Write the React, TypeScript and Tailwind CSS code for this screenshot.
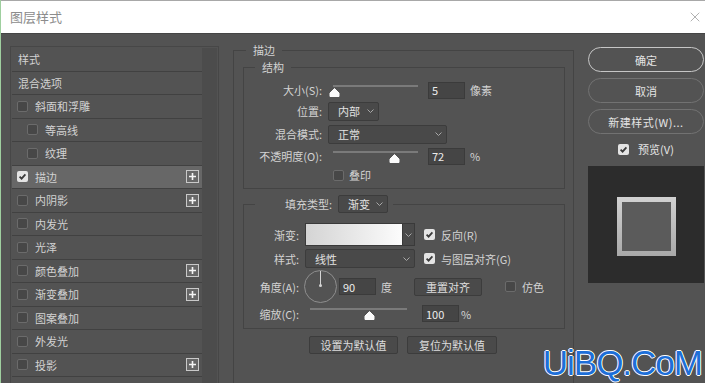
import React from 'react'
import { X } from 'lucide-react'

const layers = [
  { label: '样式', header: true },
  { label: '混合选项', header: true },
  { label: '斜面和浮雕' },
  { label: '等高线', indent: true },
  { label: '纹理', indent: true },
  { label: '描边', checked: true, plus: true, active: true },
  { label: '内阴影', plus: true },
  { label: '内发光' },
  { label: '光泽' },
  { label: '颜色叠加', plus: true },
  { label: '渐变叠加', plus: true },
  { label: '图案叠加' },
  { label: '外发光' },
  { label: '投影', plus: true },
]

const Checkbox = ({ checked = false }: { checked?: boolean }) =>
  checked ? (
    <span className="w-[11px] h-[11px] shrink-0 rounded-[2px] bg-[#e4e4e4] flex items-center justify-center">
      <svg width="9" height="9" viewBox="0 0 9 9">
        <path d="M1.6 4.6 L3.6 6.6 L7.4 2.4" stroke="#3a3a3a" strokeWidth="1.8" fill="none" />
      </svg>
    </span>
  ) : (
    <span className="w-[11px] h-[11px] shrink-0 rounded-[2px] border border-[#6b6b6b] bg-[#474747]" />
  )

const PlusBox = () => (
  <span className="w-[13px] h-[13px] border border-[#c9c9c9] bg-[#676767] flex items-center justify-center">
    <svg width="9" height="9" viewBox="0 0 9 9">
      <path d="M4.5 1 V8 M1 4.5 H8" stroke="#f4f4f4" strokeWidth="1.6" />
    </svg>
  </span>
)

const Chevron = () => (
  <svg width="7" height="4" viewBox="0 0 7 4">
    <path d="M0.5 0.5 L3.5 3.5 L6.5 0.5" stroke="#a8a8a8" fill="none" />
  </svg>
)

const Select = ({ value, w, h = 'h-[19px]' }: { value: string; w: string; h?: string }) => (
  <div className={`${w} ${h} ml-[6px] flex items-center justify-between pl-[9px] pr-[4px] bg-[#494949] border border-[#3c3c3c] rounded-[2px] text-[#e2e2e2]`}>
    <span>{value}</span>
    <Chevron />
  </div>
)

const NumBox = ({ value }: { value: string }) => (
  <div className="w-[37px] h-[17px] flex items-center pl-[3px] bg-[#454545] border border-[#3b3b3b] text-[#ececec]">
    {value}
  </div>
)

const Slider = ({ pct, w, inset }: { pct: number; w: string; inset: string }) => (
  <div className={`relative ${w} h-[18px]`}>
    <div className={`absolute ${inset} top-[4px] h-[2px] bg-[#7a7a7a]`}>
      <svg
        className="absolute top-[3px]"
        style={{ left: `calc(${pct}% - 5.5px)` }}
        width="11"
        height="9"
        viewBox="0 0 11 9"
      >
        <path d="M5.5 0.5 L10 5 V8.5 H1 V5 Z" fill="#fafafa" stroke="#fafafa" strokeLinejoin="round" />
      </svg>
    </div>
  </div>
)

const Button = ({ label, w }: { label: string; w: string }) => (
  <div className={`${w} h-[18px] flex items-center justify-center bg-[#4a4a4a] border border-[#3c3c3c] rounded-[2px] text-[#dedede]`}>
    {label}
  </div>
)

const App = () => {
  return (
    <div className='w-[705px] h-[383px] overflow-hidden relative bg-[#535353] border-l border-[#9fcf9f] text-[11px] leading-[16px] text-[#d2d2d2] font-["Noto_Sans_CJK_SC","Liberation_Sans",sans-serif]'>
      {/* title bar */}
      <div className="h-[34px] bg-white border-t border-t-[#a8a8a8] border-b border-b-[#454545] flex items-center justify-between pl-[9px] pr-[2px]">
        <span className="text-[13px] text-[#8c8c8c]">图层样式</span>
        <X size={16} strokeWidth={1} className="text-[#8a8a8a]" />
      </div>

      <div className="flex items-start h-[349px]">
        {/* layer list */}
        <div className="ml-[9px] mt-[12px] w-[209px] h-[400px] border border-[#474747] p-px flex">
          <div className="w-[190px]">
            {layers.map((l) => (
              <div
                key={l.label}
                className={`h-[23.5px] border-b border-[#414141] flex items-center pr-[3px] ${l.active ? 'bg-[#676767]' : ''} ${l.header ? 'pl-[6px]' : l.indent ? 'pl-[15px]' : 'pl-[5px]'}`}
              >
                {!l.header && <Checkbox checked={l.checked} />}
                <span className={`flex-1 ${l.header ? '' : 'ml-[7px]'}`}>{l.label}</span>
                {l.plus && <PlusBox />}
              </div>
            ))}
          </div>
          <div className="flex-1 bg-[#4c4c4c]" />
        </div>

        {/* stroke settings */}
        <fieldset className="ml-[14px] mt-[8px] w-[341px] border border-[#444444] pl-[9px] pr-[8px] pb-[80px]">
          <legend className="ml-[3px] px-[7px]">描边</legend>

          <fieldset className="mt-px border border-[#444444] pb-[6px]">
            <legend className="ml-[11px] px-[7px]">结构</legend>
            <div className="flex items-center h-[18px] mt-[6px]">
              <span className="w-[78px] text-right">大小(S):</span>
              <div className="ml-[6px]">
                <Slider pct={2} w="w-[95px]" inset="left-[5px] right-[5px]" />
              </div>
              <div className="ml-[5px]"><NumBox value="5" /></div>
              <span className="ml-[5px]">像素</span>
            </div>
            <div className="flex items-center h-[20px] mt-[2px]">
              <span className="w-[78px] text-right">位置:</span>
              <Select value="内部" w="w-[51px]" />
            </div>
            <div className="flex items-center h-[20px] mt-[3px]">
              <span className="w-[78px] text-right">混合模式:</span>
              <Select value="正常" w="w-[119px]" />
            </div>
            <div className="flex items-center h-[18px] mt-[3px]">
              <span className="w-[78px] text-right">不透明度(O):</span>
              <div className="ml-[6px]">
                <Slider pct={72} w="w-[95px]" inset="left-[5px] right-[5px]" />
              </div>
              <div className="ml-[5px]"><NumBox value="72" /></div>
              <span className="ml-[5px]">%</span>
            </div>
            <div className="flex items-center h-[14px] mt-[3px] pl-[89px]">
              <Checkbox />
              <span className="ml-[5px]">叠印</span>
            </div>
          </fieldset>

          <fieldset className="mt-[6px] border border-[#444444] pb-[5px]">
            <legend className="ml-[11px] pl-[30px] pr-[5px]">
              <span className="inline-flex items-center h-[18px]">
                <span>填充类型:</span>
                <Select value="渐变" w="w-[50px]" h="h-[18px]" />
              </span>
            </legend>

            <div className="flex items-center h-[23px] mt-[10px]">
              <span className="w-[55px] text-right">渐变:</span>
              <div className="ml-[6px] w-[110px] h-[23px] flex border border-[#3a3a3a]">
                <div className="flex-1 bg-gradient-to-r from-[#d4d4d4] to-[#fcfcfc]" />
                <div className="w-[12px] flex items-center justify-center bg-[#4a4a4a] border-l border-[#3a3a3a]">
                  <Chevron />
                </div>
              </div>
              <div className="ml-[9px] flex items-center">
                <Checkbox checked />
                <span className="ml-[6px]">反向(R)</span>
              </div>
            </div>

            <div className="flex items-center h-[19px] mt-[3px]">
              <span className="w-[55px] text-right">样式:</span>
              <Select value="线性" w="w-[110px]" />
              <div className="ml-[9px] flex items-center">
                <Checkbox checked />
                <span className="ml-[6px]">与图层对齐(G)</span>
              </div>
            </div>

            <div className="flex items-center h-[33px] mt-[2px]">
              <span className="w-[55px] text-right">角度(A):</span>
              <div className="ml-[5px] w-[33px] h-[33px] rounded-full border border-[#8e8e8e] flex flex-col items-center">
                <span className="w-px h-[15px] bg-[#d4d4d4]" />
                <span className="w-[3px] h-[3px] -mt-[2px] rounded-full bg-[#d4d4d4]" />
              </div>
              <div className="ml-[2px]"><NumBox value="90" /></div>
              <span className="ml-[5px]">度</span>
              <div className="ml-[22px]"><Button label="重置对齐" w="w-[68px]" /></div>
              <div className="ml-[23px] flex items-center">
                <Checkbox />
                <span className="ml-[6px]">仿色</span>
              </div>
            </div>

            <div className="flex items-center h-[19px] mt-[1px]">
              <span className="w-[55px] text-right">缩放(C):</span>
              <div className="ml-[6px] self-start">
                <Slider pct={61} w="w-[107px]" inset="left-[5px] right-[5px]" />
              </div>
              <div className="ml-[10px]"><NumBox value="100" /></div>
              <span className="ml-[2px]">%</span>
            </div>
          </fieldset>

          <div className="flex gap-[9px] mt-[7px] pl-[66px]">
            <Button label="设置为默认值" w="w-[89px]" />
            <Button label="复位为默认值" w="w-[90px]" />
          </div>
        </fieldset>

        {/* actions */}
        <div className="ml-[14px] mt-[13px] w-[116px] flex flex-col text-[#e4e4e4]">
          <div className="h-[25px] rounded-full border-[1.5px] border-[#c6c6c6] flex items-center justify-center">确定</div>
          <div className="h-[25px] mt-[6px] rounded-full border border-[#727272] flex items-center justify-center">取消</div>
          <div className="h-[25px] mt-[6px] rounded-full border border-[#727272] flex items-center justify-center tracking-[0.5px]">新建样式(W)...</div>
          <div className="h-[12px] mt-[9px] flex items-center justify-center gap-[9px]">
            <Checkbox checked />
            <span>预览(V)</span>
          </div>
          <div className="h-[117px] mt-[11px] bg-[#2c2c2c] flex items-center justify-center pt-[3px]">
            <div className="w-[59px] h-[59px] p-[5px] bg-gradient-to-b from-[#d2d2d2] to-[#a9a9a9]">
              <div className="w-full h-full bg-[#5b5b5b]" />
            </div>
          </div>
        </div>
      </div>

      {/* watermark */}
      <div className='absolute right-[3px] top-[345px] text-[35px] leading-none tracking-[-1px] text-[#1d6fd8] font-["Liberation_Sans",sans-serif] [text-shadow:1px_0_#fff,-1px_0_#fff,0_1px_#fff,0_-1px_#fff]'>
        UiBQ.CoM
      </div>
    </div>
  )
}

export default App
